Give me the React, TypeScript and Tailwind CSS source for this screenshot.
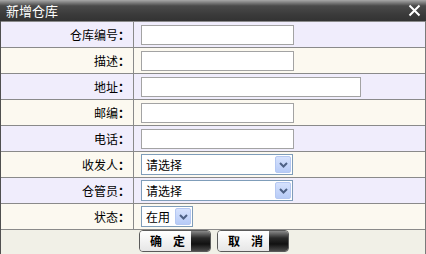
import React from 'react'

const font = '"Noto Sans CJK SC", "Liberation Sans", sans-serif'

function Arrow() {
  return (
    <span className="absolute right-[1px] top-[1px] bottom-[1px] w-[16px] rounded-[2px] border border-[#b5c8f2] bg-[linear-gradient(to_bottom,#d6e2fd,#b7cbf7)] flex items-center justify-center">
      <svg width="9" height="6" viewBox="0 0 9 6">
        <path d="M1 1 L4.5 4.5 L8 1" fill="none" stroke="#4d6185" strokeWidth="2" />
      </svg>
    </span>
  )
}

function Select({ text, width }: { text: string; width: number }) {
  return (
    <div
      className="relative h-[21px] border border-[#7f9db9] bg-white flex items-center pl-[4px] text-[12px] text-black"
      style={{ width }}
    >
      {text}
      <Arrow />
    </div>
  )
}

function Input({ width }: { width: number }) {
  return <div className="h-[20px] border border-[#a3a3a3] bg-white" style={{ width }} />
}

function Row({ label, odd, children }: { label: string; odd: boolean; children: React.ReactNode }) {
  return (
    <div className={`flex h-[26px] border-t border-[#8a8a8a] ${odd ? 'bg-[#f0edfc]' : 'bg-[#fcf9f0]'}`}>
      <div className="w-[133px] border-r border-[#8a8a8a] flex items-center justify-end pr-[3px] text-[12px] text-black">
        {label}
        <span className="font-bold">：</span>
      </div>
      <div className="flex-1 flex items-center pl-[7px]">{children}</div>
    </div>
  )
}

function Btn({ text }: { text: string }) {
  return (
    <div className="flex h-[22px] w-[72px] rounded-[4px] border border-[#5a5a5a] overflow-hidden">
      <div className="w-[51px] bg-[linear-gradient(to_bottom,#ffffff,#e6e6e6)] flex items-center justify-center gap-[11px] pl-[4px] text-[12px] font-bold text-black">
        <span>{text[0]}</span>
        <span>{text[1]}</span>
      </div>
      <div className="flex-1 bg-[linear-gradient(to_bottom,#8a8a8a_0%,#2a2a2a_35%,#111111_65%,#4a4a4a_100%)]" />
    </div>
  )
}

export default function App() {
  return (
    <div className="w-[426px] h-[254px] overflow-hidden bg-[#f1f0e7]" style={{ fontFamily: font }}>
      <div className="h-[21px] flex items-center justify-between pl-[6px] pr-[5px] bg-[linear-gradient(to_bottom,#a8a8a8_0%,#4a4a4a_28%,#3a3a3a_70%,#333333_100%)]">
        <span className="text-[13px] text-white">新增仓库</span>
        <svg width="13" height="13" viewBox="0 0 13 13">
          <path d="M1.5 1.5 L11.5 11.5 M11.5 1.5 L1.5 11.5" stroke="#ffffff" strokeWidth="2" />
        </svg>
      </div>
      <div className="border-l border-l-[#505050] border-r border-r-[#7a7a7a] h-[233px] flex flex-col">
        <Row label="仓库编号" odd>
          <Input width={153} />
        </Row>
        <Row label="描述" odd={false}>
          <Input width={153} />
        </Row>
        <Row label="地址" odd>
          <Input width={220} />
        </Row>
        <Row label="邮编" odd={false}>
          <Input width={153} />
        </Row>
        <Row label="电话" odd>
          <Input width={153} />
        </Row>
        <Row label="收发人" odd={false}>
          <Select text="请选择" width={152} />
        </Row>
        <Row label="仓管员" odd>
          <Select text="请选择" width={152} />
        </Row>
        <Row label="状态" odd={false}>
          <Select text="在用" width={52} />
        </Row>
        <div className="flex-1 border-t border-[#8a8a8a] flex justify-center gap-[6px] pl-[2px]">
          <Btn text="确定" />
          <Btn text="取消" />
        </div>
      </div>
    </div>
  )
}
